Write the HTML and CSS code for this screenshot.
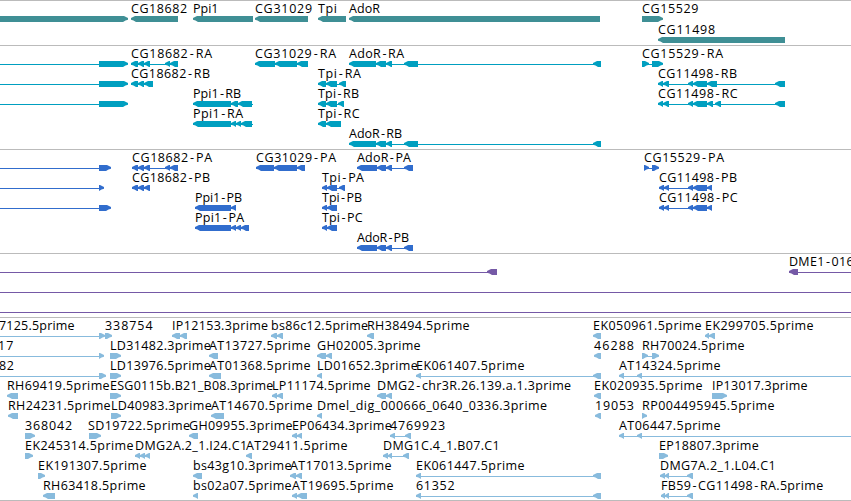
FILE: index.html
```
<!DOCTYPE html>
<html>
  <head>
    <meta charset="utf-8"/>
    <title>Genome browser</title>
    <link rel="stylesheet" href="styles.css">
  </head>
  <body>
    <div class="browser">
      <div class="track gene" id="gene"></div>
      <div class="track transcript" id="transcript"></div>
      <div class="track cds" id="cds"></div>
      <div class="track insertion" id="insertion"></div>
      <div class="track est" id="est"></div>
    </div>
    <script src="tracks.js"></script>
  </body>
</html>
```
FILE: styles.css
```
* {
  margin: 0;
  padding: 0;
  box-sizing: border-box;
}

body {
  background: #fff;
  font-family: 'Open Sans', 'DejaVu Sans', sans-serif;
  font-size: 12.5px;
}

.browser {
  display: flex;
  flex-direction: column;
  width: 851px;
  height: 501px;
  overflow: hidden;
  border-bottom: 1px solid #bbb;
}

.track {
  flex: none;
  padding-top: 2px;
  border-top: 1px solid #bbb;
}

.row {
  display: block;
  width: 851px;
  height: 20px;
  overflow: visible;
}

.label {
  fill: #000;
}

.gene {
  height: 45px;
  color: #3f8f95;
}

.gene .row {
  height: 21px;
}

.transcript {
  height: 104px;
  color: #009fc0;
}

.cds {
  height: 104px;
  color: #316dcd;
}

.insertion {
  height: 64px;
  color: #7559a6;
}

.est {
  height: 183px;
  color: #88bbdd;
}

.shape {
  fill: currentColor;
}
```
FILE: tracks.js
```
// feature: [label, label start, label end, strand, blocks, line start, line end]
var adoR = [[349, 376], [376, 386], [386, 392], [404, 418], [593, 601]];
var adoP = [[357, 377], [377, 386], [386, 392], [404, 413]];
var cgP = [[659, 664], [664, 669], [688, 693], [693, 707], [707, 712]];
var ekLong = [[416, 421], [593, 601]];
var atLong = [[619, 624], [637, 642]];

var tracks = {
  gene: [
    [
      ['', 0, 0, '>', [[-20, 128]]],
      ['CG18682', 131, 187, '<', [[131, 178]]],
      ['Ppi1', 193, 218.5, '<', [[193, 253]]],
      ['CG31029', 255, 312, '<', [[255, 308]]],
      ['Tpi', 318, 337, '<', [[318, 346]]],
      ['AdoR', 349, 380, '<', [[349, 600]]],
      ['CG15529', 642, 698.5, '>', [[642, 663]]]
    ],
    [
      ['CG11498', 658, 715, '<', [[658, 785]]]
    ]
  ],
  transcript: [
    [
      ['', 0, 0, '>', [[99, 128]], -20],
      ['CG18682-RA', 131, 212, '<', [[131, 138], [138, 144], [144, 150], [165, 170], [170, 178]]],
      ['CG31029-RA', 255, 336, '<', [[255, 275], [275, 297], [297, 308]]],
      ['AdoR-RA', 349, 404, '<', adoR],
      ['CG15529-RA', 642, 723, '>', [[642, 649], [652, 663]]]
    ],
    [
      ['', 0, 0, '>', [[99, 128]], -20],
      ['CG18682-RB', 131, 210, '<', [[131, 138], [138, 144], [144, 153]]],
      ['Tpi-RA', 318, 361, '<', [[318, 326], [326, 337], [339, 346]]],
      ['CG11498-RB', 658, 737, '<', [[658, 663], [663, 669], [688, 693], [693, 707], [707, 717], [775, 785]]]
    ],
    [
      ['', 0, 0, '>', [[99, 128]], -20],
      ['Ppi1-RB', 193, 241, '<', [[193, 231], [231, 238], [238, 252]], 193, 253],
      ['Tpi-RB', 318, 359, '<', [[318, 326], [326, 337], [338, 344]]],
      ['CG11498-RC', 658, 737.5, '<', [[658, 663], [663, 669], [688, 693], [693, 707], [707, 713], [715, 721], [775, 785]]]
    ],
    [
      ['Ppi1-RA', 193, 243, '<', [[193, 231], [231, 236], [236, 241], [241, 252]], 193, 253],
      ['Tpi-RC', 318, 359.5, '<', [[318, 326], [326, 341]]]
    ],
    [
      ['AdoR-RB', 349, 402, '<', adoR]
    ]
  ],
  cds: [
    [
      ['', 0, 0, '>', [[99, 111]], -20],
      ['CG18682-PA', 132, 212, '<', [[132, 138], [138, 144], [144, 150], [165, 170], [170, 178]]],
      ['CG31029-PA', 256, 336, '<', [[256, 274], [274, 297], [297, 305]]],
      ['AdoR-PA', 357, 411, '<', adoP],
      ['CG15529-PA', 644, 724, '>', [[644, 649], [652, 659]]]
    ],
    [
      ['', 0, 0, '>', [[99, 104]], -20],
      ['CG18682-PB', 132, 210, '<', [[132, 138], [138, 144], [144, 150]]],
      ['Tpi-PA', 322, 364, '<', [[322, 327], [327, 337], [339, 345]]],
      ['CG11498-PB', 659, 737, '<', cgP]
    ],
    [
      ['', 0, 0, '>', [[99, 111]], -20],
      ['Ppi1-PB', 195, 242, '<', [[195, 231], [231, 236]]],
      ['Tpi-PB', 322, 362, '<', [[322, 327], [327, 337]]],
      ['CG11498-PC', 659, 737.5, '<', cgP]
    ],
    [
      ['Ppi1-PA', 195, 244, '<', [[195, 231], [231, 236], [236, 241], [241, 249]]],
      ['Tpi-PC', 322, 362.5, '<', [[322, 327], [327, 337]]]
    ],
    [
      ['AdoR-PB', 357, 409, '<', adoP]
    ]
  ],
  insertion: [
    [
      ['', 0, 0, '<', [[487, 497]], -20, 497],
      ['DME1-016', 789, 853.5, '<', [[789, 798]], 789, 871]
    ],
    [
      ['', 0, 0, '<', [], -20, 871]
    ],
    [
      ['', 0, 0, '<', [], -20, 871]
    ]
  ],
  est: [
    [
      ['7125.5prime', -1, 74.5, '>', [[99, 105]], -20],
      ['338754', 105, 152.5, '>', [[105, 112]]],
      ['IP12153.3prime', 172, 268, '<', [[172, 180], [180, 187]]],
      ['bs86c12.5prime', 271, 368, '<', [[271, 277], [277, 283]]],
      ['RH38494.5prime', 367, 469.5, '<', [[367, 374]]],
      ['EK050961.5prime', 593, 701.5, '<', [[593, 601]]],
      ['EK299705.5prime', 705, 813.5, '<', [[705, 709], [709, 715]]]
    ],
    [
      ['17', -2, 13.5, '>', [[99, 104]], -20],
      ['LD31482.3prime', 110, 210.5, '>', [[110, 121]]],
      ['AT13727.5prime', 209, 310.5, '<', [[209, 218]]],
      ['GH02005.3prime', 317, 420.5, '<', [[317, 326], [326, 332]]],
      ['46288', 594, 634, '<', [[594, 601]]],
      ['RH70024.5prime', 642, 744.5, '>', [[642, 648], [652, 659]]]
    ],
    [
      ['82', -1, 14, '>', [[99, 106]], -20],
      ['LD13976.5prime', 110, 210.5, '>', [[110, 121]]],
      ['AT01368.5prime', 209, 310.5, '<', [[209, 221]]],
      ['LD01652.3prime', 317, 417.5, '<', [[317, 322]]],
      ['EK061407.5prime', 416, 524.5, '<', ekLong],
      ['AT14324.5prime', 619, 720.5, '<', atLong, 619, 871]
    ],
    [
      ['RH69419.5prime', 7, 109.5, '<', [[7, 18]]],
      ['ESG0115b.B21_B08.3prime', 110, 273, '>', [[110, 121]]],
      ['LP11174.5prime', 272, 370.5, '<', [[272, 277], [277, 283]]],
      ['DMG2-chr3R.26.139.a.1.3prime', 377, 571, '<', [[377, 386], [386, 392]]],
      ['EK020935.5prime', 594, 702.5, '<', [[594, 601]]],
      ['IP13017.3prime', 712, 807.5, '>', [[712, 727]]]
    ],
    [
      ['RH24231.5prime', 8, 110.5, '<', [[8, 18]]],
      ['LD40983.3prime', 111, 211.5, '>', [[111, 121]]],
      ['AT14670.5prime', 211, 312.5, '<', [[211, 224]]],
      ['Dmel_dig_000666_0640_0336.3prime', 317, 547, '<', [[317, 322]]],
      ['19053', 595, 634, '<', [[595, 601]]],
      ['RP004495945.5prime', 642, 774.5, '>', [[642, 647]]]
    ],
    [
      ['368042', 25, 72, '>', [[25, 35]]],
      ['SD19722.5prime', 88, 190, '>', [[89, 101]]],
      ['GH09955.3prime', 189, 292.5, '<', [[189, 198]]],
      ['EP06434.3prime', 292, 391.5, '<', [[292, 297], [297, 302]]],
      ['4769923', 390, 445, '<', [[390, 395], [405, 411]]],
      ['AT06447.5prime', 619, 720.5, '<', atLong, 619, 871]
    ],
    [
      ['EK245314.5prime', 25, 133.5, '>', [[25, 33]]],
      ['DMG2A.2_1.I24.C1', 135, 247, '<', [[135, 140], [140, 145], [145, 150]]],
      ['AT29411.5prime', 246, 347.5, '<', [[246, 252]]],
      ['DMG1C.4_1.B07.C1', 383, 499.5, '<', [[383, 388], [388, 392], [403, 409]]],
      ['EP18807.3prime', 659, 758.5, '>', [[659, 668]]]
    ],
    [
      ['EK191307.5prime', 38, 146.5, '>', [[38, 45]]],
      ['bs43g10.3prime', 193, 291.5, '<', [[193, 202]]],
      ['AT17013.5prime', 290, 391.5, '<', [[290, 296], [296, 302]]],
      ['EK061447.5prime', 416, 524.5, '<', ekLong],
      ['DMG7A.2_1.L04.C1', 660, 775.5, '<', [[660, 665], [665, 669], [687, 693]]]
    ],
    [
      ['RH63418.5prime', 43, 145.5, '<', [[43, 55]]],
      ['bs02a07.5prime', 193, 291.5, '<', [[193, 198]]],
      ['AT19695.5prime', 292, 393.5, '<', [[292, 297], [297, 307]]],
      ['61352', 416, 454.5, '<', ekLong],
      ['FB59-CG11498-RA.5prime', 661, 823, '<', [[661, 665], [665, 669], [687, 693]]]
    ]
  ]
};

function add(parent, name, attrs) {
  var el = document.createElementNS('http://www.w3.org/2000/svg', name);
  for (var key in attrs) {
    el.setAttribute(key, attrs[key]);
  }
  parent.appendChild(el);
  return el;
}

// a block is 6px high with a blunt 5px arrow head on its strand side
function block(start, end, strand) {
  var dir = strand === '<' ? 1 : -1;
  var tip = dir > 0 ? start : end;
  var tail = dir > 0 ? end : start;
  var head = Math.min(5, end - start) * dir;
  return 'M' + tip + ' 15L' + (tip + head * 0.8) + ' 13H' + tail + 'V19H' + (tip + head) +
    'L' + (tip + head * 0.5) + ' 17.5L' + tip + ' 16.7Z';
}

// each glyph gets its own x, the slack is shared evenly after wider hyphens
function drawLabel(row, label, start, end) {
  var text = add(row, 'text', {class: 'label', x: start, y: 10});
  text.textContent = label;
  var hyphens = label.split('-').length - 1;
  var slack = (end - start - text.getComputedTextLength() - hyphens * 2.6) / (label.length - 1);
  var dx = [0];
  for (var i = 1; i < label.length; i++) {
    var extra = (label[i] === '-' ? 1.3 : 0) + (label[i - 1] === '-' ? 1.3 : 0);
    dx.push((slack + extra).toFixed(2));
  }
  text.setAttribute('dx', dx.join(' '));
}

function drawFeature(row, f) {
  var blocks = f[4];
  var from = f[5] !== undefined ? f[5] : blocks[0][0];
  var to = f[6] !== undefined ? f[6] : blocks[blocks.length - 1][1];
  if (blocks.length !== 1 || f[5] !== undefined) {
    // the intron line stops short of a final arrow tip
    add(row, 'rect', {class: 'shape', x: from, y: 16, width: to - from - (f[3] === '>' ? 2 : 0), height: 1});
  }
  blocks.forEach(function (b) {
    add(row, 'path', {class: 'shape', d: block(b[0], b[1], f[3])});
  });
  if (f[0]) {
    drawLabel(row, f[0], f[1], f[2]);
  }
}

Object.keys(tracks).forEach(function (name) {
  var track = document.getElementById(name);
  tracks[name].forEach(function (features) {
    var row = add(track, 'svg', {class: 'row'});
    features.forEach(function (f) {
      drawFeature(row, f);
    });
  });
});
```
